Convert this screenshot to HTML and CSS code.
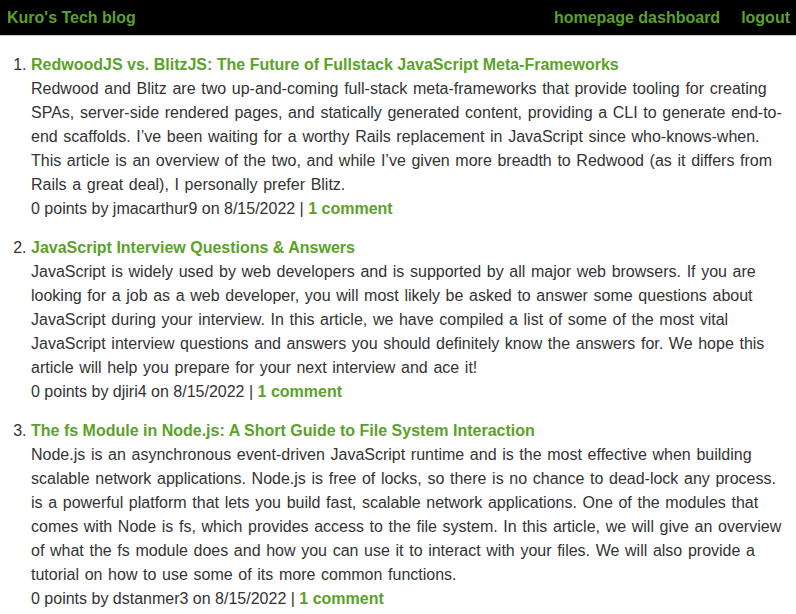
FILE: index.html
```html
<!DOCTYPE html>
<html lang="en">
<head>
<meta charset="utf-8">
<title>Kuro's Tech blog</title>
<link rel="stylesheet" href="styles.css">
</head>
<body>
<header class="topbar">
  <a class="brand" href="#">Kuro's Tech blog</a>
  <nav class="nav">
    <a href="#">homepage dashboard</a>
    <a href="#">logout</a>
  </nav>
</header>
<ol class="posts">
  <li class="post">
    <a class="post-title" href="#">RedwoodJS vs. BlitzJS: The Future of Fullstack JavaScript Meta-Frameworks</a>
    <p class="post-body">Redwood and Blitz are two up-and-coming full-stack meta-frameworks that provide tooling for creating SPAs, server-side rendered pages, and statically generated content, providing a CLI to generate end-to-end scaffolds. I’ve been waiting for a worthy Rails replacement in JavaScript since who-knows-when. This article is an overview of the two, and while I’ve given more breadth to Redwood (as it differs from Rails a great deal), I personally prefer Blitz.</p>
    <p class="post-meta">0 points by jmacarthur9 on 8/15/2022 | <a href="#">1 comment</a></p>
  </li>
  <li class="post">
    <a class="post-title" href="#">JavaScript Interview Questions &amp; Answers</a>
    <p class="post-body">JavaScript is widely used by web developers and is supported by all major web browsers. If you are looking for a job as a web developer, you will most likely be asked to answer some questions about JavaScript during your interview. In this article, we have compiled a list of some of the most vital JavaScript interview questions and answers you should definitely know the answers for. We hope this article will help you prepare for your next interview and ace it!</p>
    <p class="post-meta">0 points by djiri4 on 8/15/2022 | <a href="#">1 comment</a></p>
  </li>
  <li class="post">
    <a class="post-title" href="#">The fs Module in Node.js: A Short Guide to File System Interaction</a>
    <p class="post-body">Node.js is an asynchronous event-driven JavaScript runtime and is the most effective when building scalable network applications. Node.js is free of locks, so there is no chance to dead-lock any process. is a powerful platform that lets you build fast, scalable network applications. One of the modules that comes with Node is fs, which provides access to the file system. In this article, we will give an overview of what the fs module does and how you can use it to interact with your files. We will also provide a tutorial on how to use some of its more common functions.</p>
    <p class="post-meta">0 points by dstanmer3 on 8/15/2022 | <a href="#">1 comment</a></p>
  </li>
</ol>
</body>
</html>
```

FILE: styles.css
```css
html, body {
  margin: 0;
  padding: 0;
  background: #fff;
}

body {
  font-family: "Liberation Sans", Arial, Helvetica, sans-serif;
  font-size: 16px;
  line-height: 24px;
  color: #333;
}

a {
  color: #5ba229;
  font-weight: bold;
  text-decoration: none;
}

.topbar {
  display: flex;
  justify-content: space-between;
  align-items: center;
  height: 35px;
  padding: 0 6px 0 7px;
  background: #000;
  border-bottom: 1px solid #c8c8c8;
}

.nav {
  display: flex;
  gap: 21px;
}

.posts {
  margin: 17px 0 0;
  padding: 0 3px 0 31px;
}

.post {
  margin-bottom: 15px;
}

.post-body,
.post-meta {
  margin: 0;
}

.post-body {
  word-spacing: 1.2px;
}
```
